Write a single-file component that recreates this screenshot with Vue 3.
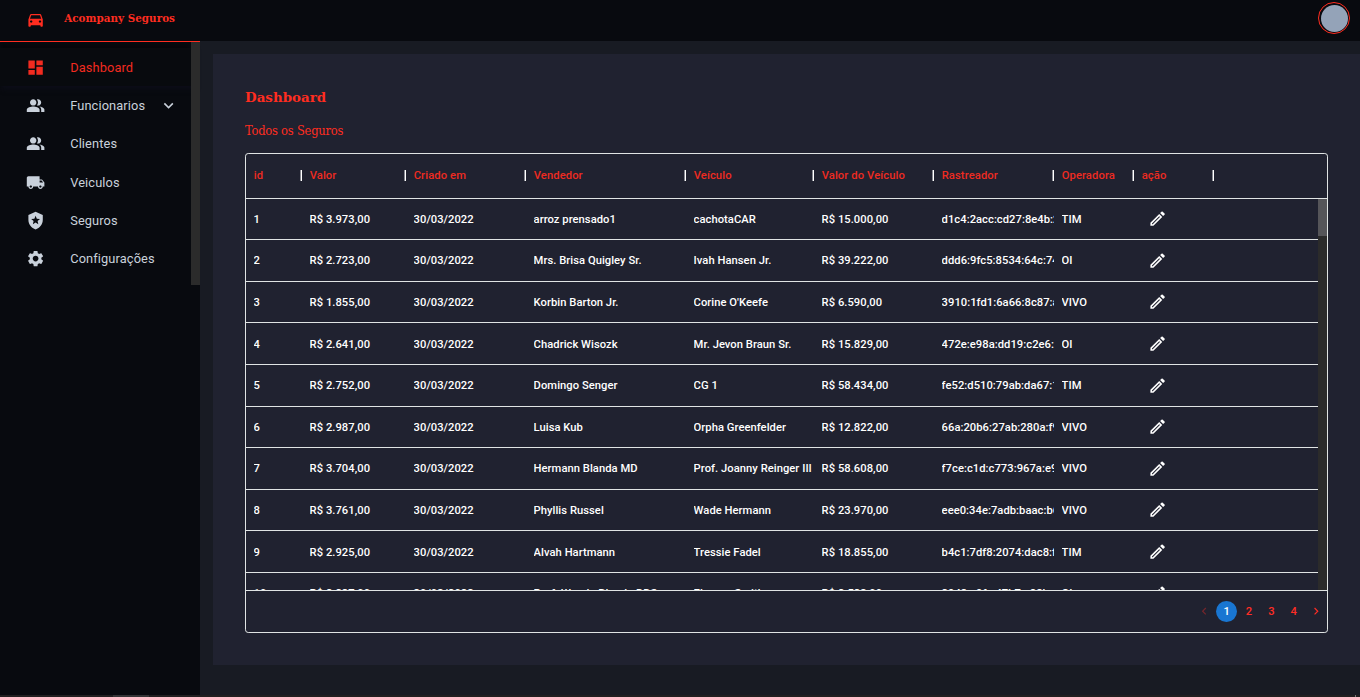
<script setup>
const icons = {
  car: 'M18.92 6.01C18.72 5.42 18.16 5 17.5 5h-11c-.66 0-1.21.42-1.42 1.01L3 12v8c0 .55.45 1 1 1h1c.55 0 1-.45 1-1v-1h12v1c0 .55.45 1 1 1h1c.55 0 1-.45 1-1v-8l-2.08-5.99zM6.5 16c-.83 0-1.5-.67-1.5-1.5S5.67 13 6.5 13s1.5.67 1.5 1.5S7.33 16 6.5 16zm11 0c-.83 0-1.5-.67-1.5-1.5s.67-1.5 1.5-1.5 1.5.67 1.5 1.5-.67 1.5-1.5 1.5zM5 11l1.5-4.5h11L19 11H5z',
  dashboard: 'M3 13h8V3H3v10zm0 8h8v-6H3v6zm10 0h8V11h-8v10zm0-18v6h8V3h-8z',
  people: 'M16.67 13.13C18.04 14.06 19 15.32 19 17v3h4v-3c0-2.18-3.57-3.47-6.33-3.87zM15 12c2.21 0 4-1.79 4-4s-1.79-4-4-4c-.47 0-.91.1-1.33.24C14.5 5.27 15 6.58 15 8s-.5 2.73-1.33 3.76c.42.14.86.24 1.33.24zM9 12c2.21 0 4-1.79 4-4s-1.79-4-4-4-4 1.79-4 4 1.79 4 4 4zm0 1c-2.67 0-8 1.34-8 4v3h16v-3c0-2.66-5.33-4-8-4z',
  truck: 'M20 8h-3V4H3c-1.1 0-2 .9-2 2v11h2c0 1.66 1.34 3 3 3s3-1.34 3-3h6c0 1.66 1.34 3 3 3s3-1.34 3-3h2v-5l-3-4zM6 18.5c-.83 0-1.5-.67-1.5-1.5s.67-1.5 1.5-1.5 1.5.67 1.5 1.5-.67 1.5-1.5 1.5zm13.5-9l1.96 2.5H17V9.5h2.5zm-1.5 9c-.83 0-1.5-.67-1.5-1.5s.67-1.5 1.5-1.5 1.5.67 1.5 1.5-.67 1.5-1.5 1.5z',
  shield: 'M12 1 3 5v6c0 5.55 3.84 10.74 9 12 5.16-1.26 9-6.45 9-12V5l-9-4zm2.5 11.59.9 3.88-3.4-2.06-3.4 2.07.9-3.87-3-2.59 3.96-.34L12 6.02l1.54 3.65 3.96.34-3 2.58z',
  gear: 'M19.14 12.94c.04-.3.06-.61.06-.94 0-.32-.02-.64-.07-.94l2.03-1.58c.18-.14.23-.41.12-.61l-1.92-3.32c-.12-.22-.37-.29-.59-.22l-2.39.96c-.5-.38-1.03-.7-1.62-.94l-.36-2.54c-.04-.24-.24-.41-.48-.41h-3.84c-.24 0-.43.17-.47.41l-.36 2.54c-.59.24-1.13.57-1.62.94l-2.39-.96c-.22-.08-.47 0-.59.22L2.74 8.87c-.12.21-.08.47.12.61l2.03 1.58c-.05.3-.09.63-.09.94s.02.64.07.94l-2.03 1.58c-.18.14-.23.41-.12.61l1.92 3.32c.12.22.37.29.59.22l2.39-.96c.5.38 1.03.7 1.62.94l.36 2.54c.05.24.24.41.48.41h3.84c.24 0 .44-.17.47-.41l.36-2.54c.59-.24 1.13-.56 1.62-.94l2.39.96c.22.08.47 0 .59-.22l1.92-3.32c.12-.22.07-.47-.12-.61l-2.01-1.58zM12 15.6c-1.98 0-3.6-1.62-3.6-3.6s1.62-3.6 3.6-3.6 3.6 1.62 3.6 3.6-1.62 3.6-3.6 3.6z',
  expand: 'M16.59 8.59 12 13.17 7.41 8.59 6 10l6 6 6-6z',
  edit: 'm14.06 9.02.92.92L5.92 19H5v-.92l9.06-9.06M17.66 3c-.25 0-.51.1-.7.29l-1.83 1.83 3.75 3.75 1.83-1.83c.39-.39.39-1.02 0-1.41l-2.34-2.34c-.2-.2-.45-.29-.71-.29zm-3.6 3.19L3 17.25V21h3.75L17.81 9.94l-3.75-3.75z',
  before: 'M15.41 7.41L14 6l-6 6 6 6 1.41-1.41L10.83 12z',
  next: 'M10 6L8.59 7.41 13.17 12l-4.58 4.59L10 18l6-6z',
}

const menu = [
  { label: 'Dashboard', icon: 'dashboard', active: true },
  { label: 'Funcionarios', icon: 'people', expandable: true },
  { label: 'Clientes', icon: 'people' },
  { label: 'Veiculos', icon: 'truck' },
  { label: 'Seguros', icon: 'shield' },
  { label: 'Configurações', icon: 'gear' },
]

const columns = ['id', 'Valor', 'Criado em', 'Vendedor', 'Veículo', 'Valor do Veículo', 'Rastreador', 'Operadora', 'ação']

const day = '30/03/2022'
const rows = [
  ['1', 'R$ 3.973,00', day, 'arroz prensado1', 'cachotaCAR', 'R$ 15.000,00', 'd1c4:2acc:cd27:8e4b:2', 'TIM'],
  ['2', 'R$ 2.723,00', day, 'Mrs. Brisa Quigley Sr.', 'Ivah Hansen Jr.', 'R$ 39.222,00', 'ddd6:9fc5:8534:64c:74', 'OI'],
  ['3', 'R$ 1.855,00', day, 'Korbin Barton Jr.', "Corine O'Keefe", 'R$ 6.590,00', '3910:1fd1:6a66:8c87:a', 'VIVO'],
  ['4', 'R$ 2.641,00', day, 'Chadrick Wisozk', 'Mr. Jevon Braun Sr.', 'R$ 15.829,00', '472e:e98a:dd19:c2e6:', 'OI'],
  ['5', 'R$ 2.752,00', day, 'Domingo Senger', 'CG 1', 'R$ 58.434,00', 'fe52:d510:79ab:da67:1', 'TIM'],
  ['6', 'R$ 2.987,00', day, 'Luisa Kub', 'Orpha Greenfelder', 'R$ 12.822,00', '66a:20b6:27ab:280a:f9', 'VIVO'],
  ['7', 'R$ 3.704,00', day, 'Hermann Blanda MD', 'Prof. Joanny Reinger III', 'R$ 58.608,00', 'f7ce:c1d:c773:967a:e9', 'VIVO'],
  ['8', 'R$ 3.761,00', day, 'Phyllis Russel', 'Wade Hermann', 'R$ 23.970,00', 'eee0:34e:7adb:baac:b6', 'VIVO'],
  ['9', 'R$ 2.925,00', day, 'Alvah Hartmann', 'Tressie Fadel', 'R$ 18.855,00', 'b4c1:7df8:2074:dac8:f', 'TIM'],
  ['10', 'R$ 2.237,00', day, 'Prof. Wanda Blanda DDS', 'Eleanor Smith', 'R$ 2.523,00', '2943:c9fe:47b7:c88b:4', 'OI'],
]
</script>

<template>
  <div class="app">
    <header class="topbar">
      <div class="brand">
        <svg class="icon" viewBox="0 0 24 24"><path :d="icons.car" /></svg>
        <span class="brand-name">Acompany Seguros</span>
      </div>
      <div class="avatar"><div class="avatar-fill"></div></div>
    </header>

    <div class="layout">
      <aside class="sidebar">
        <div class="sidebar-scroll">
          <nav class="menu">
            <a v-for="item in menu" :key="item.label" class="menu-item" :class="{ active: item.active }">
              <svg class="icon" viewBox="0 0 24 24"><path :d="icons[item.icon]" /></svg>
              <span class="menu-label">{{ item.label }}</span>
              <svg v-if="item.expandable" class="icon expand" viewBox="0 0 24 24"><path :d="icons.expand" /></svg>
            </a>
          </nav>
          <div class="menu-track"></div>
        </div>
      </aside>

      <main class="content">
        <section class="panel">
          <h1>Dashboard</h1>
          <h2>Todos os Seguros</h2>

          <div class="grid">
            <div class="grid-head grid-cols">
              <div v-for="c in columns" :key="c" class="head-cell">
                <span>{{ c }}</span><i class="separator"></i>
              </div>
            </div>
            <div class="grid-body">
              <div class="grid-rows">
                <div v-for="r in rows" :key="r[0]" class="grid-row grid-cols">
                  <div v-for="(v, i) in r" :key="i" class="cell"><div class="cell-text">{{ v }}</div></div>
                  <div class="cell action">
                    <svg class="icon" viewBox="0 0 24 24"><path :d="icons.edit" /></svg>
                  </div>
                </div>
              </div>
              <div class="grid-track"><div class="grid-thumb"></div></div>
            </div>
            <div class="grid-foot">
              <span class="page disabled"><svg viewBox="0 0 24 24"><path :d="icons.before" /></svg></span>
              <span class="page current">1</span>
              <span class="page">2</span>
              <span class="page">3</span>
              <span class="page">4</span>
              <span class="page"><svg viewBox="0 0 24 24"><path :d="icons.next" /></svg></span>
            </div>
          </div>
        </section>
      </main>
    </div>

    <div class="bottom-track"><div class="bottom-thumb"></div><div class="bottom-mark"></div></div>
  </div>
</template>

<style>
body { margin: 0; background: #181b24; overflow: hidden; }
</style>

<style scoped>
* { box-sizing: border-box; }
.app {
  display: flex;
  flex-direction: column;
  width: 1360px;
  height: 697px;
  overflow: hidden;
  background: #181b23;
  color: #fff;
  font-family: Roboto, "Liberation Sans", sans-serif;
}
.icon { display: block; flex: none; width: 19.2px; height: 19.2px; fill: currentColor; }

.topbar {
  flex: none;
  display: flex;
  justify-content: space-between;
  align-items: flex-start;
  height: 41px;
  padding: 2px 10px 0 26px;
  background: #080a0f;
}
.brand { display: flex; color: #ff2d20; padding-top: 8px; }
.brand-name {
  margin: -1px 0 0 19px;
  font: bold 11.5px/18px "DejaVu Serif Condensed", "DejaVu Serif", serif;
  font-stretch: condensed;
  letter-spacing: .03px;
  white-space: nowrap;
}
.avatar {
  display: grid;
  place-items: center;
  width: 32px;
  height: 32px;
  border: 1px solid #ff2d20;
  border-radius: 50%;
}
.avatar-fill { width: 27px; height: 27px; border-radius: 50%; background: #94a3b8; }

.layout { flex: 1; min-height: 0; display: flex; }
.sidebar { flex: none; width: 200px; background: #080a0f; border-top: 1px solid #ff2d20; }
.sidebar-scroll { display: flex; height: 243px; }
.menu { flex: 1; padding-top: 6.2px; }
.menu-track { width: 9px; background: #2b2b2b; }
.menu-item {
  display: flex;
  align-items: center;
  height: 38.3px;
  padding-left: 26px;
  color: #c9d1db;
}
.menu-item.active { color: #f32b20; box-shadow: 3px 2px 5px 1px #0c0d18, 0 -4px 3px -2px #030305; background: #080a0e; }
.menu-label { margin-left: 25px; font-size: 12.8px; letter-spacing: .12px; }
.expand { margin-left: auto; margin-right: 13px; }

.content { flex: 1; min-width: 0; padding: 13px 0 0 13px; }
.panel { height: 611px; padding: 33px 32px 0; background: #202230; }
h1, h2 { margin: 0; color: #ff2d20; white-space: nowrap; }
h1 { font: bold 13.4px/20px "DejaVu Serif", serif; letter-spacing: .02px; }
h2 {
  margin-top: 14px;
  font: 400 12.8px/20px "DejaVu Serif Condensed", "DejaVu Serif", serif;
  font-stretch: condensed;
  letter-spacing: -.23px;
}

.grid {
  display: flex;
  flex-direction: column;
  width: 1083px;
  height: 480px;
  margin-top: 12px;
  border: 1px solid #e0e4e4;
  border-radius: 3.2px;
  font-size: 11.2px;
  font-weight: 500;
  letter-spacing: .11px;
}
.grid-cols { display: grid; grid-template-columns: 56px 104px 120px 160px 128px 120px 120px 80px 80px; }
.grid-head { flex: none; height: 44.55px; border-bottom: 1px solid #e0e4e4; color: #ee2b21; }
.head-cell { display: flex; justify-content: space-between; align-items: center; padding-left: 7.7px; white-space: nowrap; }
.separator { width: 2px; height: 11px; margin-right: -.4px; background: linear-gradient(90deg, #85878f 50%, #fff 50%); }
.grid-body { display: flex; height: 391.45px; overflow: hidden; }
.grid-rows { flex: 1; }
.grid-row { height: 41.6px; border-bottom: 1px solid #e0e4e4; }
.cell { display: flex; align-items: center; min-width: 0; padding-left: 7.6px; }
.cell-text { flex: 1; padding-top: .9px; overflow: hidden; white-space: nowrap; letter-spacing: .045px; }
.action { padding-left: 14px; }
.grid-track { flex: none; width: 9px; background: #2b2b2b; }
.grid-thumb { height: 37px; background: #555559; }
.grid-foot {
  flex: 1;
  display: flex;
  justify-content: flex-end;
  align-items: center;
  gap: 1.6px;
  padding-right: .4px;
  border-top: 1px solid #e0e4e4;
  color: #ff2d25;
}
.page { display: grid; place-items: center; width: 20.8px; height: 20.8px; border-radius: 50%; }
.page svg { width: 14.4px; height: 14.4px; fill: currentColor; }
.page.current { background: #1976d2; color: #fff; }
.page.disabled { opacity: .38; }

.bottom-track { flex: none; position: relative; height: 2px; background: #211f20; }
.bottom-thumb { width: 36px; height: 2px; margin-left: 113px; background: #343436; }
.bottom-mark { position: absolute; right: 4px; top: 0; width: 1px; height: 2px; background: #777; }
</style>
